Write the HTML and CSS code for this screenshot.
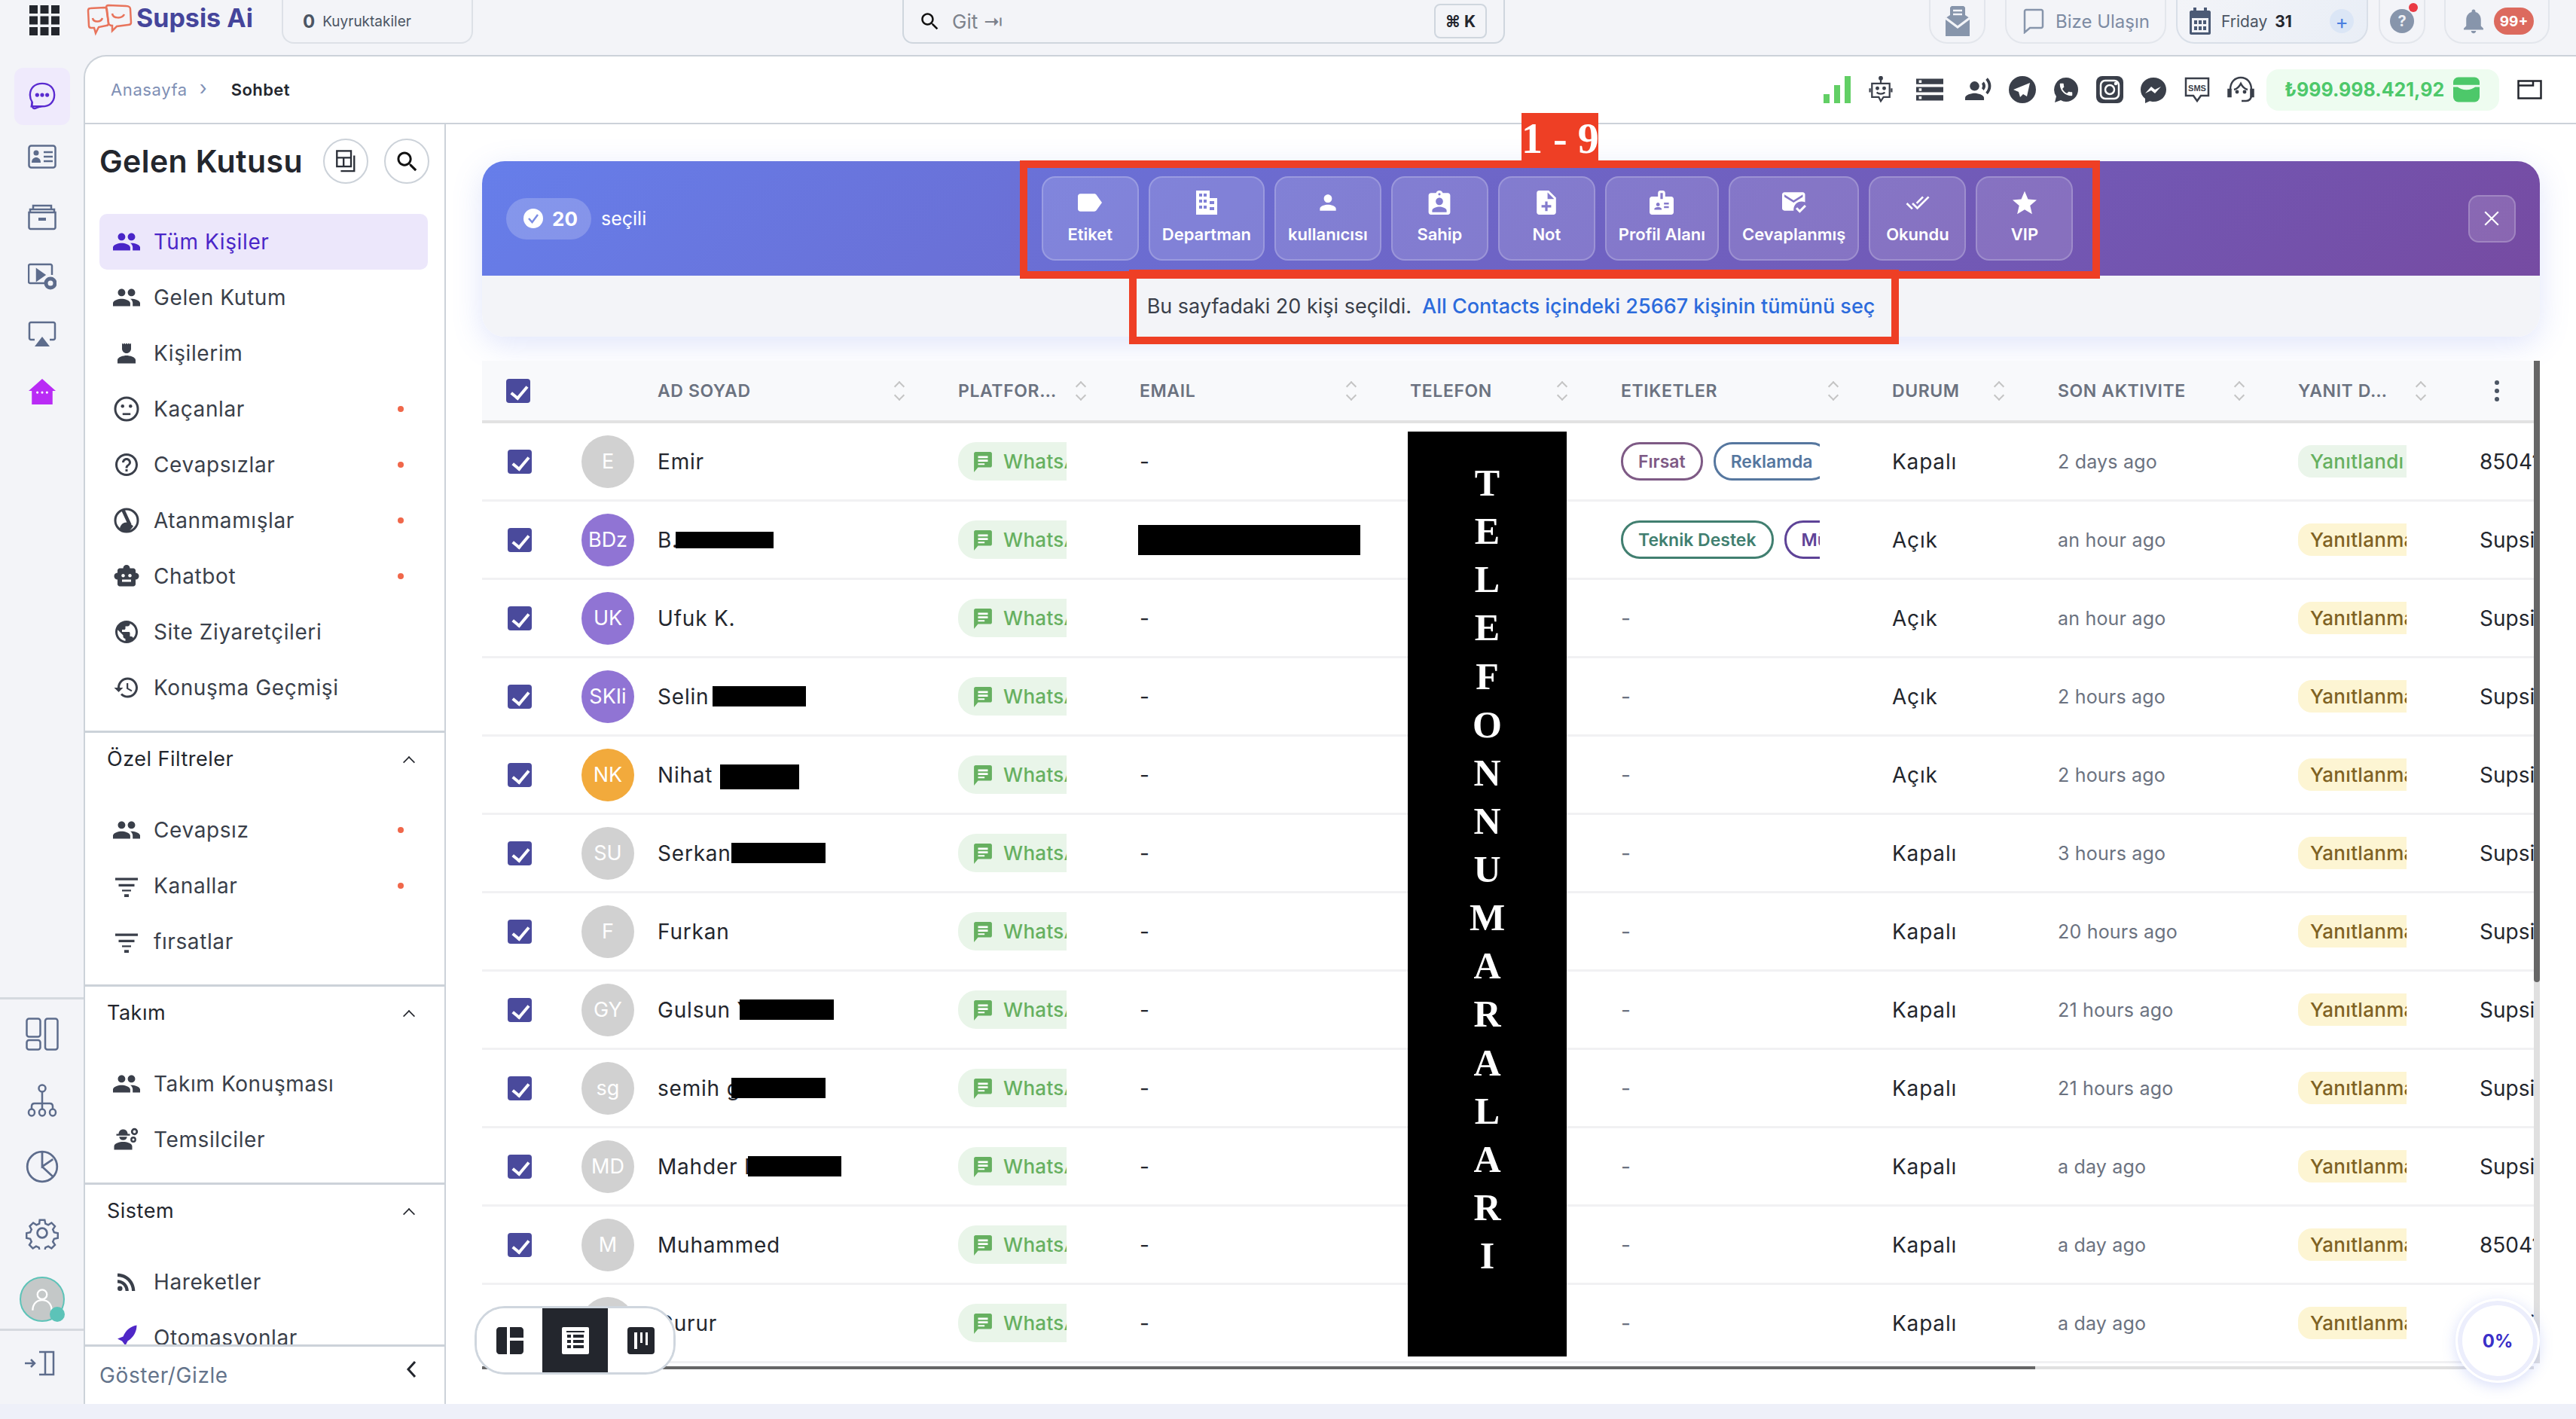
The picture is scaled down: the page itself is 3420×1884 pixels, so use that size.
FILE: index.html
```html
<!DOCTYPE html>
<html lang="en">
<head>
    <meta charset="UTF-8">
    <meta name="viewport" content="width=device-width, initial-scale=1.0">
    <title>Sohbet - Supsis Ai</title>
    <link rel="stylesheet" href="styles.css">
</head>
<body>
    <svg class="sprite" xmlns="http://www.w3.org/2000/svg">
        <symbol id="i-people" viewBox="1 4 22 16"><path d="M16 11c1.66 0 2.99-1.34 2.99-3S17.66 5 16 5c-1.66 0-3 1.34-3 3s1.34 3 3 3zm-8 0c1.66 0 2.99-1.34 2.99-3S9.66 5 8 5C6.34 5 5 6.34 5 8s1.34 3 3 3zm0 2c-2.33 0-7 1.17-7 3.5V19h14v-2.5c0-2.33-4.67-3.5-7-3.5zm8 0c-.29 0-.62.02-.97.05 1.16.84 1.97 1.97 1.97 3.45V19h6v-2.5c0-2.33-4.67-3.5-7-3.5z"/></symbol>
        <symbol id="i-person" viewBox="0 0 24 24"><path d="M12 12c2.21 0 4-1.79 4-4V3l-1 1-1-1-1 1-1-1-1 1-1-1-1 1-1-1v5c0 2.21 1.79 4 4 4zm0 2c-2.67 0-8 1.34-8 4v3h16v-3c0-2.66-5.33-4-8-4z"/></symbol>
        <symbol id="i-user" viewBox="0 0 24 24"><path d="M12 12c2.21 0 4-1.79 4-4s-1.79-4-4-4-4 1.79-4 4 1.79 4 4 4zm0 2c-2.67 0-8 1.34-8 4v2h16v-2c0-2.66-5.33-4-8-4z"/></symbol>
        <symbol id="i-sad" viewBox="0 0 24 24"><circle cx="12" cy="12" r="10" fill="none" stroke="currentColor" stroke-width="2"/><circle cx="8.5" cy="9.5" r="1.5"/><circle cx="15.5" cy="9.5" r="1.5"/><path d="M8.5 16.5h7" fill="none" stroke="currentColor" stroke-width="1.8"/></symbol>
        <symbol id="i-help" viewBox="0 0 24 24"><path d="M11 18h2v-2h-2v2zm1-16C6.48 2 2 6.48 2 12s4.48 10 10 10 10-4.48 10-10S17.52 2 12 2zm0 18c-4.41 0-8-3.59-8-8s3.59-8 8-8 8 3.59 8 8-3.59 8-8 8zm0-14c-2.21 0-4 1.79-4 4h2c0-1.1.9-2 2-2s2 .9 2 2c0 2-3 1.75-3 5h2c0-2.25 3-2.5 3-5 0-2.21-1.79-4-4-4z"/></symbol>
        <symbol id="i-unassigned" viewBox="0 0 24 24"><circle cx="12" cy="12" r="10" fill="none" stroke="currentColor" stroke-width="2"/><path d="M6 19c1-4 4-6 8-5l4 3c-2 3-4 5-6 5-2 0-4-1-6-3z"/><path d="M9 3l6 13" stroke="currentColor" stroke-width="3"/></symbol>
        <symbol id="i-bot" viewBox="0 0 24 24"><path d="M20 9V7c0-1.1-.9-2-2-2h-3c0-1.66-1.34-3-3-3S9 3.34 9 5H6c-1.1 0-2 .9-2 2v2c-1.66 0-3 1.34-3 3s1.34 3 3 3v4c0 1.1.9 2 2 2h12c1.1 0 2-.9 2-2v-4c1.66 0 3-1.34 3-3s-1.34-3-3-3zM7.5 11.5C7.5 10.67 8.17 10 9 10s1.5.67 1.5 1.5S9.83 13 9 13s-1.5-.67-1.5-1.5zM16 17H8v-2h8v2zm-1-4c-.83 0-1.5-.67-1.5-1.5S14.17 10 15 10s1.5.67 1.5 1.5S15.83 13 15 13z"/></symbol>
        <symbol id="i-globe" viewBox="0 0 24 24"><path d="M12 2C6.48 2 2 6.48 2 12s4.48 10 10 10 10-4.48 10-10S17.52 2 12 2zm-1 17.93c-3.95-.49-7-3.85-7-7.93 0-.62.08-1.21.21-1.79L9 15v1c0 1.1.9 2 2 2v1.93zm6.9-2.54c-.26-.81-1-1.39-1.9-1.39h-1v-3c0-.55-.45-1-1-1H8v-2h2c.55 0 1-.45 1-1V7h2c1.1 0 2-.9 2-2v-.41c2.93 1.19 5 4.06 5 7.41 0 2.08-.8 3.97-2.1 5.39z"/></symbol>
        <symbol id="i-history" viewBox="0 0 24 24"><path d="M13 3c-4.97 0-9 4.03-9 9H1l3.89 3.89.07.14L9 12H6c0-3.87 3.13-7 7-7s7 3.13 7 7-3.13 7-7 7c-1.93 0-3.68-.79-4.94-2.06l-1.42 1.42C8.27 19.99 10.51 21 13 21c4.97 0 9-4.03 9-9s-4.03-9-9-9zm-1 5v5l4.28 2.54.72-1.21-3.5-2.08V8H12z"/></symbol>
        <symbol id="i-filter" viewBox="0 0 24 24"><path d="M2 5h20v2.200H2zM5 10.500h14v2.200H5zM8 15.500h8v1.500H8zM10 19.500h4V22h-4z"/></symbol>
        <symbol id="i-worker" viewBox="0 0 24 24"><path d="M9 3c-2.500 0-4 1.800-4 4H3v1.500h12V7h-2c0-2.200-1.500-4-4-4zM5.500 9.500C5.800 11.500 7.200 12.500 9 12.500s3.200-1 3.500-3h-7zM9 14c-3 0-8 1.300-8 4v3h16v-3c0-2.700-5-4-8-4z"/><circle cx="19" cy="5" r="2.200" fill="none" stroke="currentColor" stroke-width="1.800"/><circle cx="18" cy="12" r="1.800" fill="none" stroke="currentColor" stroke-width="1.600"/></symbol>
        <symbol id="i-rss" viewBox="0 0 24 24"><circle cx="6.180" cy="17.820" r="2.180"/><path d="M4 4.440v2.830c7.030 0 12.730 5.700 12.730 12.730h2.830c0-8.590-6.970-15.560-15.560-15.560zm0 5.660v2.830c3.900 0 7.070 3.170 7.070 7.070h2.830c0-5.470-4.430-9.900-9.900-9.900z"/></symbol>
        <symbol id="i-rocket" viewBox="0 0 24 24"><path d="M21 1c-6 1-10 5-12 10l-5 2 4 2 3 4 2-4c5-3 8-8 8-14z" fill="#4f27c7"/><path d="M6 18c-1.500 .5-2 2-2 4 2 0 3.500-.5 4-2z" fill="#f0a24a"/></symbol>
        <symbol id="i-search" viewBox="2 2 19 19"><path d="M15.500 14h-.79l-.28-.27C15.410 12.590 16 11.110 16 9.500 16 5.910 13.090 3 9.500 3S3 5.910 3 9.500 5.910 16 9.500 16c1.610 0 3.090-.59 4.230-1.570l.27.28v.79l5 4.990L20.490 19l-4.990-5zm-6 0C7.010 14 5 11.990 5 9.500S7.010 5 9.500 5 14 7.010 14 9.500 11.990 14 9.500 14z"/></symbol>
        <symbol id="i-label" viewBox="3 5 19 14"><path d="M17.630 5.840C17.270 5.330 16.670 5 16 5L5 5.010C3.900 5.010 3 5.900 3 7v10c0 1.100.9 1.990 2 1.990L16 19c.67 0 1.270-.33 1.630-.84L22 12l-4.370-6.160z"/></symbol>
        <symbol id="i-domain" viewBox="3 2 14 16"><path d="M3 2h9v5h5v11H3zM5 4v2h2V4zm3 0v2h2V4zM5 8v2h2V8zm3 0v2h2V8zM5 12v2h2v-2zm3 0v2h2v-2zm4-3v2h3V9zm0 4v2h3v-2z" fill-rule="evenodd"/></symbol>
        <symbol id="i-owner" viewBox="3 1 18 20"><path d="M19 3h-4.180C14.400 1.840 13.300 1 12 1c-1.300 0-2.400.84-2.820 2H5c-1.100 0-2 .9-2 2v14c0 1.100.9 2 2 2h14c1.100 0 2-.9 2-2V5c0-1.100-.9-2-2-2zm-7 0c.55 0 1 .45 1 1s-.45 1-1 1-1-.45-1-1 .45-1 1-1zm0 4c1.660 0 3 1.340 3 3s-1.340 3-3 3-3-1.340-3-3 1.340-3 3-3zm6 12H6v-1.400c0-2 4-3.100 6-3.100s6 1.100 6 3.100V19z"/></symbol>
        <symbol id="i-note" viewBox="4 2 16 20"><path d="M14 2H6c-1.100 0-1.990.9-1.990 2L4 20c0 1.100.89 2 1.990 2H18c1.100 0 2-.9 2-2V8l-6-6zm2 14h-3v3h-2v-3H8v-2h3v-3h2v3h3v2zm-3-7V3.500L18.500 9H13z"/></symbol>
        <symbol id="i-badge" viewBox="2 2 20 20"><path d="M20 7h-5V4c0-1.100-.9-2-2-2h-2c-1.100 0-2 .9-2 2v3H4c-1.100 0-2 .9-2 2v11c0 1.100.9 2 2 2h16c1.100 0 2-.9 2-2V9c0-1.100-.9-2-2-2zM9 12c.83 0 1.500.67 1.500 1.500S9.830 15 9 15s-1.500-.67-1.500-1.500S8.170 12 9 12zm3 6H6v-.75c0-1 2-1.500 3-1.500s3 .5 3 1.500V18zm1-9h-2V4h2v5zm5 7.500h-4V15h4v1.500zm0-3h-4V12h4v1.500z"/></symbol>
        <symbol id="i-replied" viewBox="2 4 21 18"><path d="M12 19c0-3.870 3.130-7 7-7 1.080 0 2.090.25 3 .68V6c0-1.100-.9-2-2-2H4c-1.100 0-2 .9-2 2v12c0 1.100.9 2 2 2h8.080c-.05-.33-.08-.66-.08-1zM4 6l8 5 8-5v2l-8 5-8-5V6zm13.340 16l-3.540-3.540 1.410-1.410 2.120 2.120 4.240-4.240L23 16.340 17.340 22z"/></symbol>
        <symbol id="i-read" viewBox="0 3 24 18"><path d="M18 7l-1.410-1.410-6.340 6.340 1.410 1.410L18 7zm4.240-1.410L11.660 16.170 7.480 12l-1.410 1.410L11.660 19l12-12-1.420-1.410zM.41 13.410L6 19l1.410-1.410L1.830 12 .41 13.410z"/></symbol>
        <symbol id="i-star" viewBox="2 2 20 19"><path d="M12 17.270L18.180 21l-1.640-7.030L22 9.240l-7.190-.61L12 2 9.190 8.630 2 9.240l5.460 4.730L5.820 21z"/></symbol>
        <symbol id="i-msg" viewBox="0 0 24 26"><path d="M3 1h18c1 0 2 1 2 2v15c0 1-1 2-2 2H6l-5 6V3c0-1 1-2 2-2z"/><path d="M6 6h12v2.500H6zM6 10.500h12V13H6zM6 15h8v2H6z" fill="#fff"/></symbol>
        <symbol id="i-phone" viewBox="0 0 24 24"><path d="M6.620 10.790c1.440 2.830 3.760 5.140 6.590 6.590l2.200-2.200c.27-.27.67-.36 1.020-.24 1.120.37 2.330.57 3.570.57.55 0 1 .45 1 1V20c0 .55-.45 1-1 1-9.390 0-17-7.610-17-17 0-.55.45-1 1-1h3.500c.55 0 1 .45 1 1 0 1.250.2 2.450.57 3.570.11.35.03.74-.25 1.020l-2.200 2.200z"/></symbol>
    </svg>

    <header class="topbar">
        <svg class="apps" viewBox="0 0 40 40"><path d="M0 0h11v11H0zM14.500 0h11v11h-11zM29 0h11v11H29zM0 14.500h11v11H0zM14.500 14.500h11v11h-11zM29 14.500h11v11H29zM0 29h11v11H0zM14.500 29h11v11h-11zM29 29h11v11H29z"/></svg>
        <svg class="logo-mark" viewBox="0 0 62 44" fill="none" stroke="#e8745c" stroke-width="2.500"><path d="M3 9c0-2 1-3 3-3l19-1c2 0 3 1 3 3l2 18c0 2-1 3-3 3l-10 2-4 8-2-7-4 0c-2 0-3-1-3-3z"/><path d="M27 5c0-2 1-3 3-3l24 1c3 0 5 2 5 4l1 18c0 2-2 3-4 3l-15 2-6 6v-7c-3 0-5-2-5-4z"/><path d="M9 19c1 6 11 6 13 0M35 13c1 7 13 7 16 1"/></svg>
        <span class="logo-text">Supsis Ai</span>
        <div class="queue"><b>0</b><span>Kuyruktakiler</span></div>
        <div class="global-search">
            <svg class="ic-24"><use href="#i-search"/></svg>
            <span class="search-hint">Git ⇥</span>
            <kbd>⌘ K</kbd>
        </div>
        <div class="top-tools">
            <div class="tool tool-mail">
                <svg viewBox="0 0 32 40" class="ic-mail"><path d="M8 0h16l2 2v10l6 4v24H0V16l6-4V2z"/><path d="M0 16l16 12 16-12" fill="none" stroke="#f3f4f8" stroke-width="3"/><path d="M10 6h12M10 11h12" stroke="#f3f4f8" stroke-width="2.500"/></svg>
            </div>
            <div class="tool tool-contact">
                <svg viewBox="0 0 28 34" class="ic-chat" fill="none" stroke="#8795ab" stroke-width="2.500"><path d="M4 2h20c1 0 2 1 2 2v20c0 1-1 2-2 2H9l-7 6V4c0-1 1-2 2-2z"/></svg>
                <span>Bize Ulaşın</span>
            </div>
            <div class="tool tool-date">
                <svg viewBox="0 0 28 36" class="ic-cal"><path d="M5 0h4v4h10V0h4v4h3c1 0 2 1 2 2v28c0 1-1 2-2 2H2c-1 0-2-1-2-2V6c0-1 1-2 2-2h3zM3 14v19h22V14z"/><path d="M6 17h4v5H6zM12 17h4v5h-4zM18 17h4v5h-4zM6 25h4v5H6zM12 25h4v5h-4zM18 25h4v5h-4z"/></svg>
                <span class="day">Friday <b>31</b></span>
                <span class="plus">+</span>
            </div>
            <div class="tool tool-help"><span class="help-dot">?</span><i class="red-dot"></i></div>
            <div class="tool tool-bell">
                <svg viewBox="4 2 16 20" class="ic-bell"><path d="M12 22c1.100 0 2-.9 2-2h-4c0 1.100.89 2 2 2zm6-6v-5c0-3.070-1.640-5.640-4.500-6.320V4c0-.83-.67-1.500-1.500-1.500s-1.500.67-1.500 1.500v.68C7.630 5.360 6 7.920 6 11v5l-2 2v1h16v-1l-2-2z"/></svg>
                <span class="count">99+</span>
            </div>
        </div>
    </header>

    <div class="shell">
        <nav class="rail">
            <div class="rail-top">
                <a class="rail-item active"><svg viewBox="0 0 38 40" fill="none" stroke="currentColor" stroke-width="2.500"><path d="M19 2c10 0 17 6 17 16s-7 16-17 16H4l1-6c-2-3-3-6-3-10C2 8 9 2 19 2z"/><path d="M5 28c-1 5 1 9 3 9 3 0 5-3 10-3" /><circle cx="12" cy="18" r="1.500" fill="currentColor"/><circle cx="19" cy="18" r="1.500" fill="currentColor"/><circle cx="26" cy="18" r="1.500" fill="currentColor"/></svg></a>
                <a class="rail-item"><svg viewBox="0 0 38 32" fill="none" stroke="currentColor" stroke-width="2.500"><rect x="1.500" y="1.500" width="35" height="29" rx="3"/><circle cx="11" cy="11" r="3.500" fill="currentColor" stroke="none"/><path d="M5 24c0-5 3-7 6-7s6 2 6 7z" fill="currentColor" stroke="none"/><path d="M21 10h12M21 16h12M21 22h12"/></svg></a>
                <a class="rail-item"><svg viewBox="0 0 38 34" fill="none" stroke="currentColor" stroke-width="2.500"><path d="M7 6V2h24v4M3 11V7h32v4M1.500 11h35v20c0 1-1 2-2 2h-31c-1 0-2-1-2-2z"/><path d="M14 20h10" stroke-width="4"/></svg></a>
                <a class="rail-item"><svg viewBox="0 0 38 36" fill="none" stroke="currentColor" stroke-width="2.500"><path d="M24 26H3c-1 0-2-1-2-2V3c0-1 1-2 2-2h27c1 0 2 1 2 2v12"/><path d="M12 8l10 7-10 7z" fill="currentColor"/><circle cx="30" cy="26" r="6" stroke-width="5"/></svg></a>
                <a class="rail-item tight"><svg viewBox="0 0 38 34" fill="none" stroke="currentColor" stroke-width="2.500"><path d="M9 24H4c-1 0-2-1-2-2V3c0-1 1-2 2-2h30c1 0 2 1 2 2v19c0 1-1 2-2 2h-5"/><path d="M19 20l10 13H9z" fill="currentColor" stroke="none"/></svg></a>
                <a class="rail-item tight home"><svg viewBox="0 0 34 32"><path d="M17 0l17 15h-4v17H4V15H0z"/><circle cx="11" cy="17" r="1.500" fill="#fff"/><circle cx="17" cy="17" r="1.500" fill="#fff"/><circle cx="23" cy="17" r="1.500" fill="#fff"/></svg></a>
            </div>
            <div class="rail-bottom">
                <a class="rail-item small"><svg viewBox="0 0 44 44" fill="none" stroke="currentColor" stroke-width="2.500"><rect x="1.500" y="1.500" width="18" height="24" rx="3"/><rect x="1.500" y="30" width="18" height="12.500" rx="3"/><rect x="26" y="1.500" width="16.500" height="41" rx="3"/></svg></a>
                <a class="rail-item small"><svg viewBox="0 0 40 44" fill="none" stroke="currentColor" stroke-width="2.500"><circle cx="20" cy="6" r="4.500"/><path d="M20 11v15M6 34v-4c0-2 1-4 4-4h20c3 0 4 2 4 4v4M20 26v8"/><ellipse cx="6" cy="38" rx="4" ry="4.500"/><ellipse cx="20" cy="38" rx="4" ry="4.500"/><ellipse cx="34" cy="38" rx="4" ry="4.500"/></svg></a>
                <a class="rail-item small"><svg viewBox="0 0 40 40" fill="none" stroke="currentColor" stroke-width="2.500"><circle cx="20" cy="20" r="18"/><path d="M20 2v18l13-9M20 20l13 12"/></svg></a>
                <a class="rail-item small"><svg viewBox="0 0 24 24" fill="none" stroke="currentColor" stroke-width="1.500"><circle cx="12" cy="12" r="3.500"/><path d="M10 1.500h4l.6 3 2.300 1 2.600-1.700 2.800 2.800-1.700 2.600 1 2.300 3 .6v4l-3 .6-1 2.300 1.700 2.600-2.800 2.800-2.600-1.700-2.300 1-.6 3h-4l-.6-3-2.300-1-2.600 1.700-2.800-2.800 1.700-2.600-1-2.300-3-.6v-4l3-.6 1-2.300L2 6.600l2.800-2.800 2.600 1.700 2.300-1z" transform="translate(1.200 1.200) scale(.9)"/></svg></a>
                <div class="rail-avatar">
                    <svg viewBox="0 0 40 40" fill="none" stroke="#fff" stroke-width="2.200"><circle cx="20" cy="14" r="6"/><path d="M8 34c0-8 5-13 12-13s12 5 12 13"/></svg>
                    <i class="online"></i>
                </div>
            </div>
            <div class="rail-collapse">
                <svg viewBox="0 0 40 34" fill="none" stroke="#5d6c8c" stroke-width="2.500"><path d="M0 17h12M8 12l5 5-5 5M19 2h8v30h-8M27 2h11v30H27"/></svg>
            </div>
        </nav>

        <main class="panel">
            <div class="crumbs">
                <a class="crumb-link">Anasayfa</a>
                <span class="crumb-sep">›</span>
                <span class="crumb-now">Sohbet</span>
                <div class="status-icons">
                    <svg class="st" viewBox="0 0 36 36"><path fill="#62cf65" d="M0 24h8v12H0zM14 12h8v24h-8zM28 0h8v36h-8z"/></svg>
                    <svg class="st" viewBox="0 0 36 40" fill="none" stroke="#3a3f4a" stroke-width="2.500"><circle cx="18" cy="3" r="2" fill="#3a3f4a"/><path d="M18 5v5M5 11h26v20H22l-4 6-3-6H5z"/><circle cx="13" cy="18" r="1.500" fill="#3a3f4a"/><circle cx="23" cy="18" r="1.500" fill="#3a3f4a"/><path d="M12 24c3 3 9 3 12 0M2 18v6M34 18v6"/></svg>
                    <svg class="st st-gap" viewBox="2 4 20 16" fill="#3a3f4a"><path d="M2 20h20v-4H2v4zm2-3h2v2H4v-2zM2 4v4h20V4H2zm4 3H4V5h2v2zm-4 7h20v-4H2v4zm2-3h2v2H4v-2z"/></svg>
                    <svg class="st st-gap" viewBox="1 2 23 20" fill="#3a3f4a"><circle cx="9" cy="9" r="4"/><path d="M9 15c-2.670 0-8 1.340-8 4v2h16v-2c0-2.660-5.330-4-8-4zm7.760-9.640l-1.680 1.690c.84 1.180.84 2.710 0 3.890l1.680 1.690c2.020-2.020 2.020-5.070 0-7.270zM20.070 2l-1.630 1.630c2.770 3.020 2.770 7.560 0 10.740L20.070 16c3.900-3.890 3.910-9.950 0-14z"/></svg>
                    <svg class="st" viewBox="0 0 36 36"><circle cx="18" cy="18" r="18" fill="#3a3f4a"/><path fill="#fff" d="M28 9L6 18l7 3 2 7 4-4 5 3z"/></svg>
                    <svg class="st" viewBox="0 0 36 36"><path fill="#3a3f4a" d="M18 2a16 16 0 0 1 0 32c-3 0-5-.7-7-2l-8 3 2-8a16 16 0 0 1 13-25z"/><use href="#i-phone" x="7" y="7" width="22" height="22" fill="#fff"/></svg>
                    <svg class="st" viewBox="0 0 36 36" fill="none" stroke="#fff" stroke-width="2.500"><rect width="36" height="36" rx="8" fill="#3a3f4a" stroke="none"/><rect x="6" y="6" width="24" height="24" rx="6"/><circle cx="18" cy="18" r="6"/><circle cx="26" cy="10" r="1" fill="#fff"/></svg>
                    <svg class="st" viewBox="0 0 36 36"><path fill="#3a3f4a" d="M18 2c10 0 17 7 17 16s-7 16-17 16c-2 0-3-.3-5-.8L7 36v-6C3 27 1 23 1 18 1 9 8 2 18 2z"/><path fill="#fff" d="M7 23l8-9 5 4 8-4-8 9-5-4z"/></svg>
                    <svg class="st" viewBox="0 0 36 36" fill="none" stroke="#3a3f4a" stroke-width="2.500"><path d="M3 3h30v23H23l-5 7-5-7H3z"/><text x="18" y="20" text-anchor="middle" font-family="Liberation Sans, sans-serif" font-size="11" font-weight="700" fill="#3a3f4a" stroke="none">SMS</text></svg>
                    <svg class="st" viewBox="0 0 36 36" fill="none" stroke="#3a3f4a" stroke-width="2.500"><path d="M4 18C4 8 10 2 18 2s14 6 14 16v8c0 4-3 7-7 7h-6"/><path d="M9 18c4-1 7-4 9-8 2 4 5 7 9 8"/><rect x="1.500" y="18" width="3" height="9" fill="#3a3f4a"/><rect x="31.500" y="18" width="3" height="9" fill="#3a3f4a"/><circle cx="13" cy="21" r="1.200" fill="#3a3f4a"/><circle cx="23" cy="21" r="1.200" fill="#3a3f4a"/></svg>
                    <div class="wallet">
                        <span>₺999.998.421,92</span>
                        <svg viewBox="0 0 36 34"><rect width="36" height="34" rx="7" fill="#4dc86a"/><path d="M0 12h36" stroke="#eefcf0" stroke-width="3"/><path d="M5 12c6 7 20 7 26 0" fill="#eefcf0"/></svg>
                    </div>
                    <svg class="st-last" viewBox="0 0 33 26" fill="none" stroke="#23262d" stroke-width="2.500"><path d="M21 1.500h10.500v23h-30V1.500H21v6H1.500"/></svg>
                </div>
            </div>

            <div class="panel-body">
                <aside class="inbox">
                    <div class="inbox-head">
                        <h1>Gelen Kutusu</h1>
                        <button class="round-btn"><svg viewBox="0 0 28 32" fill="none" stroke="#2b2f38" stroke-width="2.500"><rect x="1.500" y="1.500" width="20" height="22"/><path d="M1.500 11h20M11 11v12M26 8v22H7"/></svg></button>
                        <button class="round-btn"><svg class="ic-24"><use href="#i-search"/></svg></button>
                    </div>
                    <div class="inbox-scroll">
                        <section class="menu-block">
                            <a class="menu-item active"><svg><use href="#i-people"/></svg><span>Tüm Kişiler</span></a>
                            <a class="menu-item"><svg><use href="#i-people"/></svg><span>Gelen Kutum</span></a>
                            <a class="menu-item"><svg><use href="#i-person"/></svg><span>Kişilerim</span></a>
                            <a class="menu-item"><svg><use href="#i-sad"/></svg><span>Kaçanlar</span><i class="dot"></i></a>
                            <a class="menu-item"><svg><use href="#i-help"/></svg><span>Cevapsızlar</span><i class="dot"></i></a>
                            <a class="menu-item"><svg><use href="#i-unassigned"/></svg><span>Atanmamışlar</span><i class="dot"></i></a>
                            <a class="menu-item"><svg><use href="#i-bot"/></svg><span>Chatbot</span><i class="dot"></i></a>
                            <a class="menu-item"><svg><use href="#i-globe"/></svg><span>Site Ziyaretçileri</span></a>
                            <a class="menu-item"><svg><use href="#i-history"/></svg><span>Konuşma Geçmişi</span></a>
                        </section>
                        <section class="menu-block">
                            <div class="block-title">Özel Filtreler<span class="caret"></span></div>
                            <a class="menu-item"><svg><use href="#i-people"/></svg><span>Cevapsız</span><i class="dot"></i></a>
                            <a class="menu-item"><svg><use href="#i-filter"/></svg><span>Kanallar</span><i class="dot"></i></a>
                            <a class="menu-item"><svg><use href="#i-filter"/></svg><span>fırsatlar</span></a>
                        </section>
                        <section class="menu-block">
                            <div class="block-title">Takım<span class="caret"></span></div>
                            <a class="menu-item"><svg><use href="#i-people"/></svg><span>Takım Konuşması</span></a>
                            <a class="menu-item"><svg><use href="#i-worker"/></svg><span>Temsilciler</span></a>
                        </section>
                        <section class="menu-block">
                            <div class="block-title">Sistem<span class="caret"></span></div>
                            <a class="menu-item"><svg><use href="#i-rss"/></svg><span>Hareketler</span></a>
                            <a class="menu-item"><svg><use href="#i-rocket"/></svg><span>Otomasyonlar</span></a>
                        </section>
                    </div>
                    <div class="inbox-foot">
                        <span>Göster/Gizle</span>
                        <svg viewBox="0 0 14 24" fill="none" stroke="#23262d" stroke-width="3"><path d="M12 2L3 12l9 10"/></svg>
                    </div>
                </aside>

                <div class="content">
                    <div class="banner">
                        <div class="banner-top">
                            <div class="selected">
                                <span class="selected-pill">
                                    <svg viewBox="0 0 26 26"><circle cx="13" cy="13" r="13" fill="#fff"/><path d="M7 13l4.500 5L19 8" fill="none" stroke="#7b8de4" stroke-width="2.500"/></svg>
                                    <b>20</b>
                                </span>
                                <span>seçili</span>
                            </div>
                            <div class="actions">
                                <button class="action"><svg><use href="#i-label"/></svg>Etiket</button>
                                <button class="action"><svg><use href="#i-domain"/></svg>Departman</button>
                                <button class="action"><svg><use href="#i-user"/></svg>kullanıcısı</button>
                                <button class="action"><svg><use href="#i-owner"/></svg>Sahip</button>
                                <button class="action"><svg><use href="#i-note"/></svg>Not</button>
                                <button class="action"><svg><use href="#i-badge"/></svg>Profil Alanı</button>
                                <button class="action"><svg><use href="#i-replied"/></svg>Cevaplanmış</button>
                                <button class="action"><svg><use href="#i-read"/></svg>Okundu</button>
                                <button class="action"><svg><use href="#i-star"/></svg>VIP</button>
                            </div>
                            <button class="banner-close"><svg viewBox="0 0 20 20" fill="none" stroke="#fff" stroke-width="2"><path d="M2 2l16 16M18 2L2 18"/></svg></button>
                        </div>
                        <div class="banner-bottom">
                            Bu sayfadaki 20 kişi seçildi.
                            <a>All Contacts içindeki 25667 kişinin tümünü seç</a>
                        </div>
                        <div class="mark mark-actions"></div>
                        <div class="mark mark-select"></div>
                        <div class="mark-tag">1 - 9</div>
                    </div>

                    <div class="table-wrap">
                        <div class="table">
                            <div class="row head">
                                <div class="cell"><span class="check"></span></div>
                                <div class="cell"><span class="th th-name">AD SOYAD</span><span class="sort"></span></div>
                                <div class="cell"><span class="th">PLATFOR…</span><span class="sort"></span></div>
                                <div class="cell"><span class="th">EMAIL</span><span class="sort"></span></div>
                                <div class="cell"><span class="th">TELEFON</span><span class="sort"></span></div>
                                <div class="cell"><span class="th">ETIKETLER</span><span class="sort"></span></div>
                                <div class="cell"><span class="th">DURUM</span><span class="sort"></span></div>
                                <div class="cell"><span class="th">SON AKTIVITE</span><span class="sort"></span></div>
                                <div class="cell"><span class="th">YANIT D…</span><span class="sort"></span></div>
                                <div class="cell"><span class="kebab"></span></div>
                            </div>

                            <div class="row">
                                <div class="cell"><span class="check"></span></div>
                                <div class="cell"><span class="avatar">E</span><span class="name">Emir</span></div>
                                <div class="cell"><span class="clip"><span class="platform"><svg><use href="#i-msg"/></svg>WhatsApp</span></span></div>
                                <div class="cell">-</div>
                                <div class="cell"></div>
                                <div class="cell"><span class="tags"><span class="tag tag-plum">Fırsat</span><span class="tag tag-blue">Reklamda</span></span></div>
                                <div class="cell status">Kapalı</div>
                                <div class="cell when">2 days ago</div>
                                <div class="cell"><span class="clip"><span class="reply ok">Yanıtlandı</span></span></div>
                                <div class="cell source">850412</div>
                            </div>
                            <div class="row">
                                <div class="cell"><span class="check"></span></div>
                                <div class="cell"><span class="avatar purple">BDz</span><span class="name">B.<i class="redact r-b"></i></span></div>
                                <div class="cell"><span class="clip"><span class="platform"><svg><use href="#i-msg"/></svg>WhatsApp</span></span></div>
                                <div class="cell"><i class="redact r-mail"></i></div>
                                <div class="cell"></div>
                                <div class="cell"><span class="tags"><span class="tag tag-green">Teknik Destek</span><span class="tag tag-violet">Müşteri</span></span></div>
                                <div class="cell status">Açık</div>
                                <div class="cell when">an hour ago</div>
                                <div class="cell"><span class="clip"><span class="reply">Yanıtlanmadı</span></span></div>
                                <div class="cell source">Supsis</div>
                            </div>
                            <div class="row">
                                <div class="cell"><span class="check"></span></div>
                                <div class="cell"><span class="avatar purple">UK</span><span class="name">Ufuk K.</span></div>
                                <div class="cell"><span class="clip"><span class="platform"><svg><use href="#i-msg"/></svg>WhatsApp</span></span></div>
                                <div class="cell">-</div>
                                <div class="cell"></div>
                                <div class="cell dash">-</div>
                                <div class="cell status">Açık</div>
                                <div class="cell when">an hour ago</div>
                                <div class="cell"><span class="clip"><span class="reply">Yanıtlanmadı</span></span></div>
                                <div class="cell source">Supsis</div>
                            </div>
                            <div class="row">
                                <div class="cell"><span class="check"></span></div>
                                <div class="cell"><span class="avatar purple">SKIi</span><span class="name">Selin<i class="redact r-selin"></i></span></div>
                                <div class="cell"><span class="clip"><span class="platform"><svg><use href="#i-msg"/></svg>WhatsApp</span></span></div>
                                <div class="cell">-</div>
                                <div class="cell"></div>
                                <div class="cell dash">-</div>
                                <div class="cell status">Açık</div>
                                <div class="cell when">2 hours ago</div>
                                <div class="cell"><span class="clip"><span class="reply">Yanıtlanmadı</span></span></div>
                                <div class="cell source">Supsis</div>
                            </div>
                            <div class="row">
                                <div class="cell"><span class="check"></span></div>
                                <div class="cell"><span class="avatar orange">NK</span><span class="name">Nihat<i class="redact r-nihat"></i></span></div>
                                <div class="cell"><span class="clip"><span class="platform"><svg><use href="#i-msg"/></svg>WhatsApp</span></span></div>
                                <div class="cell">-</div>
                                <div class="cell"></div>
                                <div class="cell dash">-</div>
                                <div class="cell status">Açık</div>
                                <div class="cell when">2 hours ago</div>
                                <div class="cell"><span class="clip"><span class="reply">Yanıtlanmadı</span></span></div>
                                <div class="cell source">Supsis</div>
                            </div>
                            <div class="row">
                                <div class="cell"><span class="check"></span></div>
                                <div class="cell"><span class="avatar">SU</span><span class="name">Serkan<i class="redact r-serkan"></i></span></div>
                                <div class="cell"><span class="clip"><span class="platform"><svg><use href="#i-msg"/></svg>WhatsApp</span></span></div>
                                <div class="cell">-</div>
                                <div class="cell"></div>
                                <div class="cell dash">-</div>
                                <div class="cell status">Kapalı</div>
                                <div class="cell when">3 hours ago</div>
                                <div class="cell"><span class="clip"><span class="reply">Yanıtlanmadı</span></span></div>
                                <div class="cell source">Supsis</div>
                            </div>
                            <div class="row">
                                <div class="cell"><span class="check"></span></div>
                                <div class="cell"><span class="avatar">F</span><span class="name">Furkan</span></div>
                                <div class="cell"><span class="clip"><span class="platform"><svg><use href="#i-msg"/></svg>WhatsApp</span></span></div>
                                <div class="cell">-</div>
                                <div class="cell"></div>
                                <div class="cell dash">-</div>
                                <div class="cell status">Kapalı</div>
                                <div class="cell when">20 hours ago</div>
                                <div class="cell"><span class="clip"><span class="reply">Yanıtlanmadı</span></span></div>
                                <div class="cell source">Supsis</div>
                            </div>
                            <div class="row">
                                <div class="cell"><span class="check"></span></div>
                                <div class="cell"><span class="avatar">GY</span><span class="name">Gulsun Y<i class="redact r-gulsun"></i></span></div>
                                <div class="cell"><span class="clip"><span class="platform"><svg><use href="#i-msg"/></svg>WhatsApp</span></span></div>
                                <div class="cell">-</div>
                                <div class="cell"></div>
                                <div class="cell dash">-</div>
                                <div class="cell status">Kapalı</div>
                                <div class="cell when">21 hours ago</div>
                                <div class="cell"><span class="clip"><span class="reply">Yanıtlanmadı</span></span></div>
                                <div class="cell source">Supsis</div>
                            </div>
                            <div class="row">
                                <div class="cell"><span class="check"></span></div>
                                <div class="cell"><span class="avatar">sg</span><span class="name">semih g<i class="redact r-semih"></i></span></div>
                                <div class="cell"><span class="clip"><span class="platform"><svg><use href="#i-msg"/></svg>WhatsApp</span></span></div>
                                <div class="cell">-</div>
                                <div class="cell"></div>
                                <div class="cell dash">-</div>
                                <div class="cell status">Kapalı</div>
                                <div class="cell when">21 hours ago</div>
                                <div class="cell"><span class="clip"><span class="reply">Yanıtlanmadı</span></span></div>
                                <div class="cell source">Supsis</div>
                            </div>
                            <div class="row">
                                <div class="cell"><span class="check"></span></div>
                                <div class="cell"><span class="avatar">MD</span><span class="name">Mahder D<i class="redact r-mahder"></i></span></div>
                                <div class="cell"><span class="clip"><span class="platform"><svg><use href="#i-msg"/></svg>WhatsApp</span></span></div>
                                <div class="cell">-</div>
                                <div class="cell"></div>
                                <div class="cell dash">-</div>
                                <div class="cell status">Kapalı</div>
                                <div class="cell when">a day ago</div>
                                <div class="cell"><span class="clip"><span class="reply">Yanıtlanmadı</span></span></div>
                                <div class="cell source">Supsis</div>
                            </div>
                            <div class="row">
                                <div class="cell"><span class="check"></span></div>
                                <div class="cell"><span class="avatar">M</span><span class="name">Muhammed</span></div>
                                <div class="cell"><span class="clip"><span class="platform"><svg><use href="#i-msg"/></svg>WhatsApp</span></span></div>
                                <div class="cell">-</div>
                                <div class="cell"></div>
                                <div class="cell dash">-</div>
                                <div class="cell status">Kapalı</div>
                                <div class="cell when">a day ago</div>
                                <div class="cell"><span class="clip"><span class="reply">Yanıtlanmadı</span></span></div>
                                <div class="cell source">850412</div>
                            </div>
                            <div class="row">
                                <div class="cell"><span class="check"></span></div>
                                <div class="cell"><span class="avatar">G</span><span class="name">Gurur</span></div>
                                <div class="cell"><span class="clip"><span class="platform"><svg><use href="#i-msg"/></svg>WhatsApp</span></span></div>
                                <div class="cell">-</div>
                                <div class="cell"></div>
                                <div class="cell dash">-</div>
                                <div class="cell status">Kapalı</div>
                                <div class="cell when">a day ago</div>
                                <div class="cell"><span class="clip"><span class="reply">Yanıtlanmadı</span></span></div>
                                <div class="cell source">Supsis</div>
                            </div>
                        </div>
                        <div class="vscroll"><div class="vthumb"></div></div>
                        <div class="hscroll"><div class="hthumb"></div></div>

                        <div class="phone-mask">
                            <span>T</span><span>E</span><span>L</span><span>E</span><span>F</span><span>O</span><span>N</span><span>N</span><span>U</span><span>M</span><span>A</span><span>R</span><span>A</span><span>L</span><span>A</span><span>R</span><span>I</span>
                        </div>
                    </div>

                    <div class="view-switch">
                        <button><svg viewBox="0 0 36 36"><path d="M4 0h10v36H4c-2 0-4-2-4-4V4c0-2 2-4 4-4zM18 0h14c2 0 4 2 4 4v10H18zM18 18h18v14c0 2-2 4-4 4H18z"/></svg></button>
                        <button class="on"><svg viewBox="0 0 36 36"><rect width="36" height="36" rx="2" fill="#fff"/><path fill="#23262d" d="M6 5h24v2H6zM7 10h5v4H7zM15 10h14v4H15zM7 17h5v4H7zM15 17h14v4H15zM7 24h5v4H7zM15 24h14v4H15z"/></svg></button>
                        <button><svg viewBox="0 0 36 36"><rect width="36" height="36" rx="4"/><path fill="#fff" d="M9 7h4v22H9zM17 7h3v14h-3zM24 7h3v17h-3z"/></svg></button>
                    </div>
                    <div class="progress-ring"><span>0%</span></div>
                </div>
            </div>
        </main>
    </div>
    <div class="page-foot"></div>
</body>
</html>
```

FILE: styles.css
```css
* {
    box-sizing: border-box;
}

body {
    font-family: Inter, "Open Sans", sans-serif;
    background-color: #f3f4f8;
    color: #23262d;
    margin: 0;
    height: 100vh;
    overflow: hidden;
}

.sprite {
    display: none;
}

button {
    font-family: inherit;
    cursor: pointer;
}

.ic-24 {
    width: 24px;
    height: 24px;
    fill: #111;
}

/* top bar */
.topbar {
    height: 73px;
    display: flex;
    align-items: flex-start;
    padding-left: 39px;
}

.apps {
    width: 40px;
    height: 40px;
    margin-top: 7px;
    fill: #23262d;
}

.logo-mark {
    width: 62px;
    height: 44px;
    margin: 5px 0 0 35px;
}

.logo-text {
    font-size: 34px;
    font-weight: 700;
    color: #45459b;
    line-height: 48px;
    margin-left: 5px;
    width: 155px;
    white-space: nowrap;
}

.queue {
    width: 254px;
    height: 58px;
    margin-left: 38px;
    padding-left: 26px;
    display: flex;
    align-items: center;
    gap: 10px;
    border: 2px solid #dde1e7;
    border-top: 0;
    border-radius: 0 0 16px 16px;
    font-size: 19px;
    color: #4b5563;
}

.queue b {
    font-size: 24px;
}

.global-search {
    width: 800px;
    height: 58px;
    margin-left: 570px;
    padding: 0 22px;
    display: flex;
    align-items: center;
    border: 2px solid #cfd6de;
    border-top: 0;
    border-radius: 0 0 14px 14px;
}

.search-hint {
    margin-left: 18px;
    font-size: 26px;
    color: #7d828c;
}

.global-search kbd {
    margin-left: auto;
    width: 70px;
    height: 46px;
    display: flex;
    align-items: center;
    justify-content: center;
    border: 2px solid #cfd6de;
    border-radius: 8px;
    font-family: inherit;
    font-size: 21px;
    font-weight: 700;
}

.top-tools {
    margin-left: auto;
    margin-right: 35px;
    display: flex;
}

.tool {
    height: 58px;
    display: flex;
    align-items: center;
    border: 2px solid #e3e6ec;
    border-top: 0;
    border-radius: 0 0 24px 24px;
}

.tool-mail {
    width: 75px;
    justify-content: center;
}

.ic-mail {
    width: 32px;
    height: 40px;
    fill: #8795ab;
}

.tool-contact {
    width: 214px;
    margin-left: 26px;
    padding-left: 22px;
    gap: 15px;
    font-size: 24px;
    color: #7d8ba3;
}

.ic-chat {
    width: 28px;
    height: 34px;
}

.tool-date {
    width: 255px;
    margin-left: 13px;
    padding-left: 16px;
    border-color: #d9dfe8;
    background: linear-gradient(110deg, #f3f4f8, #e9eef6);
}

.ic-cal {
    width: 28px;
    height: 36px;
    fill: #4b5a75;
}

.day {
    margin-left: 14px;
    font-size: 21px;
    color: #4b5563;
}

.day b {
    color: #23262d;
    margin-left: 4px;
}

.plus {
    margin-left: auto;
    margin-right: 17px;
    width: 32px;
    height: 32px;
    border-radius: 50%;
    display: flex;
    align-items: center;
    justify-content: center;
    background: #dbe6f6;
    color: #4a80e0;
    font-size: 26px;
}

.tool-help {
    width: 62px;
    margin-left: 14px;
    justify-content: center;
    position: relative;
}

.help-dot {
    width: 32px;
    height: 32px;
    border-radius: 50%;
    background: #8795ab;
    color: #eef0f5;
    font-size: 20px;
    font-weight: 700;
    display: flex;
    align-items: center;
    justify-content: center;
}

.red-dot {
    position: absolute;
    top: 4px;
    right: 8px;
    width: 12px;
    height: 12px;
    border-radius: 50%;
    background: #ea3a44;
}

.tool-bell {
    width: 140px;
    margin-left: 25px;
    padding-left: 24px;
    gap: 14px;
}

.ic-bell {
    width: 26px;
    height: 36px;
    fill: #8795ab;
}

.count {
    width: 53px;
    height: 36px;
    border-radius: 18px;
    background: #dc6a5e;
    color: #fff;
    font-size: 19px;
    font-weight: 700;
    display: flex;
    align-items: center;
    justify-content: center;
}

/* layout */
.shell {
    display: flex;
    height: 1791px;
}

.rail {
    width: 111px;
    flex-shrink: 0;
    display: flex;
    flex-direction: column;
    color: #5d6c8c;
}

.rail-top {
    height: 1254px;
    display: flex;
    flex-direction: column;
    align-items: center;
    padding-top: 17px;
    border-bottom: 3px solid #d5d9df;
}

.rail-item {
    width: 74px;
    height: 76px;
    display: flex;
    align-items: center;
    justify-content: center;
    margin-top: 4px;
    border-radius: 12px;
}

.rail-item.tight {
    margin-top: 0;
}

.rail-item svg {
    width: 38px;
    height: 38px;
}

.rail-item.active {
    background: #efeafc;
    color: #5a2bd0;
    margin-top: 0;
}

.rail-item.home svg {
    fill: #b92bf5;
    width: 36px;
    height: 36px;
}

.rail-bottom {
    height: 440px;
    display: flex;
    flex-direction: column;
    align-items: center;
    padding-top: 24px;
    border-bottom: 3px solid #d5d9df;
}

.rail-item.small {
    height: 44px;
    margin: 0 0 44px;
}

.rail-item.small svg {
    width: 44px;
    height: 44px;
}

.rail-avatar {
    width: 60px;
    height: 60px;
    margin-top: -8px;
    border-radius: 50%;
    background: #c4c8c8;
    border: 2px solid #5cc3b8;
    position: relative;
    display: flex;
    align-items: center;
    justify-content: center;
}

.rail-avatar svg {
    width: 42px;
    height: 42px;
}

.online {
    position: absolute;
    right: -2px;
    bottom: -2px;
    width: 20px;
    height: 20px;
    border-radius: 50%;
    background: #5cc3b8;
}

.rail-collapse {
    padding: 26px 0 0 33px;
}

.rail-collapse svg {
    width: 40px;
    height: 34px;
}

.panel {
    flex: 1;
    background: #fff;
    border-top: 2px solid #ccd2d9;
    border-left: 2px solid #ccd2d9;
    border-top-left-radius: 30px;
    display: flex;
    flex-direction: column;
    min-width: 0;
}

.page-foot {
    height: 20px;
    background: #eef0f9;
}

/* breadcrumb row */
.crumbs {
    height: 90px;
    flex-shrink: 0;
    padding: 0 45px 0 34px;
    display: flex;
    align-items: center;
    border-bottom: 2px solid #ccd2d9;
    font-size: 22px;
}

.crumb-link {
    color: #7f90b5;
    letter-spacing: 0.6px;
}

.crumb-sep {
    margin: 0 32px 0 16px;
    color: #7f90b5;
    font-size: 26px;
    line-height: 1;
    position: relative;
    top: -2px;
}

.crumb-now {
    font-weight: 600;
    letter-spacing: 0.4px;
}

.status-icons {
    margin-left: auto;
    display: flex;
    align-items: center;
    gap: 22px;
}

.st {
    width: 36px;
    height: 36px;
}

.st-gap {
    margin-left: 7px;
}

.wallet {
    width: 309px;
    height: 55px;
    margin-left: -6px;
    padding-left: 24px;
    display: flex;
    align-items: center;
    gap: 12px;
    background: #eefcf0;
    border-radius: 16px;
    color: #4dc86a;
    font-size: 25px;
    font-weight: 700;
    white-space: nowrap;
}

.wallet svg {
    width: 35px;
    height: 34px;
}

.st-last {
    width: 33px;
    height: 26px;
    margin-left: 2px;
}

.panel-body {
    flex: 1;
    display: flex;
    min-height: 0;
}

/* inbox column */
.inbox {
    width: 479px;
    flex-shrink: 0;
    border-right: 2px solid #ccd2d9;
    display: flex;
    flex-direction: column;
}

.inbox-head {
    height: 119px;
    flex-shrink: 0;
    padding: 0 22px 22px 19px;
    display: flex;
    align-items: center;
}

.inbox-head h1 {
    margin: 0;
    font-size: 41px;
    font-weight: 600;
    letter-spacing: 0.4px;
    width: 297px;
    flex-shrink: 0;
    white-space: nowrap;
}

.round-btn {
    width: 60px;
    height: 60px;
    flex-shrink: 0;
    padding: 0;
    margin-right: 21px;
    border: 2px solid #ccd2d9;
    border-radius: 50%;
    background: #fff;
    display: flex;
    align-items: center;
    justify-content: center;
}

.round-btn:last-child {
    margin-right: 0;
}

.round-btn svg {
    width: 28px;
    height: 30px;
}

.inbox-scroll {
    flex: 1;
    overflow: hidden;
    min-height: 0;
}

.menu-block {
    padding-bottom: 20px;
    border-bottom: 3px solid #ccd2d9;
}

.menu-block:last-child {
    border-bottom: 0;
}

.block-title {
    height: 92px;
    padding: 17px 40px 0 29px;
    line-height: 36px;
    font-size: 27px;
    letter-spacing: 0.5px;
    display: flex;
    justify-content: space-between;
}

.caret {
    width: 14px;
    height: 14px;
    margin: 15px 0 0;
    border-left: 2px solid #23262d;
    border-top: 2px solid #23262d;
    transform: rotate(45deg) scale(.8);
}

.menu-item {
    height: 74px;
    margin: 0 22px 0 19px;
    padding-left: 18px;
    display: flex;
    align-items: center;
    gap: 18px;
    font-size: 28px;
    letter-spacing: 0.6px;
    color: #3a3f4a;
    border-radius: 10px;
    white-space: nowrap;
}

.menu-item svg {
    width: 36px;
    height: 36px;
    flex-shrink: 0;
    fill: #3a3f4a;
    color: #3a3f4a;
}

.menu-item.active {
    background: #ece7fb;
    color: #4a26c8;
}

.menu-item.active svg {
    fill: #4a26c8;
}

.dot {
    margin-left: auto;
    margin-right: 32px;
    width: 8px;
    height: 8px;
    border-radius: 50%;
    background: #f0674a;
}

.inbox-foot {
    height: 79px;
    flex-shrink: 0;
    padding: 8px 37px 0 19px;
    display: flex;
    justify-content: space-between;
    align-items: flex-start;
    border-top: 3px solid #ccd2d9;
    font-size: 28px;
    letter-spacing: 0.6px;
    color: #64748b;
    line-height: 60px;
}

.inbox-foot svg {
    width: 14px;
    height: 24px;
    margin-top: 10px;
}

/* main content */
.content {
    flex: 1;
    min-width: 0;
    padding: 49px 48px 0 48px;
    position: relative;
}

.banner {
    position: relative;
    border-radius: 30px;
    box-shadow: 0 10px 40px rgba(102, 126, 234, 0.2);
}

.banner-top {
    height: 152px;
    padding: 0 32px;
    display: flex;
    align-items: center;
    justify-content: space-between;
    border-radius: 30px 30px 0 0;
    background: linear-gradient(135deg, #667eea 0%, #764ba2 100%);
    color: #fff;
}

.selected {
    display: flex;
    align-items: center;
    gap: 13px;
    font-size: 25px;
}

.selected-pill {
    width: 113px;
    height: 55px;
    padding-left: 23px;
    display: flex;
    align-items: center;
    gap: 12px;
    background: rgba(255, 255, 255, 0.2);
    border-radius: 28px;
}

.selected-pill svg {
    width: 26px;
    height: 26px;
}

.selected-pill b {
    font-size: 26px;
}

.actions {
    display: flex;
    gap: 13px;
}

.action {
    min-width: 129px;
    height: 112px;
    padding: 0 16px 3px;
    display: flex;
    flex-direction: column;
    align-items: center;
    justify-content: center;
    gap: 13px;
    background: rgba(255, 255, 255, 0.15);
    border: 2px solid rgba(255, 255, 255, 0.2);
    border-radius: 18px;
    color: #fff;
    font-size: 22px;
    font-weight: 600;
    white-space: nowrap;
}

.action svg {
    width: 32px;
    height: 32px;
    fill: #fff;
}

.banner-close {
    width: 63px;
    height: 63px;
    padding: 0;
    background: rgba(255, 255, 255, 0.15);
    border: 2px solid rgba(255, 255, 255, 0.2);
    border-radius: 14px;
    display: flex;
    align-items: center;
    justify-content: center;
}

.banner-close svg {
    width: 22px;
    height: 22px;
}

.banner-bottom {
    height: 81px;
    display: flex;
    align-items: center;
    justify-content: center;
    gap: 14px;
    background: #f3f4f8;
    border-radius: 0 0 30px 30px;
    font-size: 27px;
    color: #3a3f4a;
}

.banner-bottom a {
    color: #2c6bdc;
    font-weight: 500;
}

.mark {
    position: absolute;
    border: 10px solid #ee3f25;
}

.mark-actions {
    left: 714px;
    top: -1px;
    width: 1434px;
    height: 157px;
}

.mark-select {
    left: 859px;
    top: 144px;
    width: 1022px;
    height: 99px;
}

.mark-tag {
    position: absolute;
    left: 1380px;
    top: -64px;
    width: 102px;
    height: 64px;
    background: #ee3f25;
    color: #fff;
    font-family: "Liberation Serif", serif;
    font-weight: 700;
    font-size: 56px;
    line-height: 68px;
    text-align: center;
    white-space: nowrap;
}

/* table */
.table-wrap {
    margin-top: 32px;
    position: relative;
    display: grid;
    grid-template-columns: 2724px 8px;
    grid-template-rows: auto 4px;
    row-gap: 4px;
}

.table {
    min-width: 0;
    overflow: hidden;
}

.row {
    display: grid;
    grid-template-columns: 112px 500px 241px 359px 280px 360px 220px 319px 241px 92px;
    height: 104px;
    border-bottom: 3px solid #f1f1f3;
}

.row.head {
    height: 83px;
    background: #f8f9fb;
    border-bottom: 4px solid #e2e2e2;
}

.cell {
    padding-left: 20px;
    display: flex;
    align-items: center;
    min-width: 0;
    overflow: hidden;
    white-space: nowrap;
    font-size: 28px;
    letter-spacing: 0.8px;
    color: #23262d;
}

.row .cell:first-child {
    padding-left: 34px;
}

.row.head .cell:first-child {
    padding-left: 32px;
}

.row.head .cell {
    justify-content: space-between;
    padding-right: 50px;
}

.row.head .cell:nth-child(2) {
    padding-left: 121px;
}

.row.head .cell:last-child {
    padding: 0 6px 0 0;
    justify-content: center;
}

.th {
    font-size: 23px;
    font-weight: 600;
    color: #6b7280;
    letter-spacing: 0.6px;
}

.sort {
    width: 14px;
    height: 26px;
    flex-shrink: 0;
    position: relative;
    margin-right: 2px;
}

.sort::before,
.sort::after {
    content: '';
    position: absolute;
    left: 3px;
    width: 8px;
    height: 8px;
    border-left: 2px solid #c4c4c4;
    border-top: 2px solid #c4c4c4;
}

.sort::before {
    top: 2px;
    transform: rotate(45deg);
}

.sort::after {
    bottom: 2px;
    transform: rotate(225deg);
}

.kebab {
    width: 6px;
    height: 6px;
    border-radius: 50%;
    background: #4b5563;
    box-shadow: 0 -11px 0 #4b5563, 0 11px 0 #4b5563;
}

.check {
    width: 32px;
    height: 32px;
    border-radius: 4px;
    background: #4a4a9c;
    position: relative;
    flex-shrink: 0;
}

.check::after {
    content: '';
    position: absolute;
    left: 11px;
    top: 5px;
    width: 9px;
    height: 18px;
    border-right: 4px solid #fff;
    border-bottom: 4px solid #fff;
    transform: rotate(40deg);
}

.avatar {
    width: 70px;
    height: 70px;
    flex-shrink: 0;
    border-radius: 50%;
    background: #d1d1d1;
    color: #fff;
    font-size: 27px;
    letter-spacing: 0;
    display: flex;
    align-items: center;
    justify-content: center;
}

.avatar.purple {
    background: #9074d4;
}

.avatar.orange {
    background: #f2aa3c;
}

.name {
    margin-left: 31px;
    display: flex;
    align-items: center;
}

.redact {
    display: inline-block;
    background: #000;
    flex-shrink: 0;
}

.r-b { width: 130px; height: 22px; margin-left: -4px; }
.r-selin { width: 124px; height: 27px; margin-left: 5px; }
.r-nihat { width: 105px; height: 33px; margin-left: 10px; margin-top: 6px; }
.r-serkan { width: 125px; height: 27px; margin-left: 0; }
.r-gulsun { width: 125px; height: 27px; margin-left: -16px; }
.r-semih { width: 125px; height: 27px; margin-left: -12px; }
.r-mahder { width: 124px; height: 27px; margin-left: -16px; }
.r-mail { width: 295px; height: 40px; margin-left: -2px; }

.clip {
    display: block;
    width: 144px;
    overflow: hidden;
    flex-shrink: 0;
}

.platform {
    height: 51px;
    width: 220px;
    padding-left: 20px;
    display: inline-flex;
    align-items: center;
    gap: 14px;
    background: #e9f5e9;
    border-radius: 24px;
    color: #66b060;
    font-size: 26px;
    letter-spacing: 0.3px;
    font-weight: 500;
}

.platform svg {
    width: 26px;
    height: 30px;
    fill: #66b060;
}

.tags {
    width: 264px;
    display: flex;
    gap: 14px;
    overflow: hidden;
    flex-shrink: 0;
}

.tag {
    height: 51px;
    padding: 0 20px;
    display: inline-flex;
    align-items: center;
    border: 3px solid;
    border-radius: 25px;
    font-size: 23px;
    letter-spacing: 0;
    font-weight: 600;
    flex-shrink: 0;
}

.tag-plum { color: #7e5a85; }
.tag-blue { color: #56779f; }
.tag-green { color: #417f70; }
.tag-violet { color: #5e4397; }

.dash,
.when {
    color: #6b7280;
}

.when {
    font-size: 25px;
    letter-spacing: 0.2px;
}

.source {
    letter-spacing: 0;
}

.reply {
    height: 43px;
    width: 220px;
    padding-left: 16px;
    display: inline-flex;
    align-items: center;
    background: #fdf5d3;
    border-radius: 18px;
    color: #7f6223;
    font-size: 26px;
    letter-spacing: 0.3px;
    font-weight: 500;
}

.reply.ok {
    background: #eaf5ea;
    color: #66b060;
}

.vscroll {
    background: #e0e0e0;
}

.vthumb {
    height: 825px;
    background: #666;
    border-radius: 0 0 4px 4px;
}

.hscroll {
    grid-column: 1 / 2;
    background: #e0e0e0;
}

.hthumb {
    width: 2062px;
    height: 100%;
    background: #666;
}

.phone-mask {
    position: absolute;
    left: 1229px;
    top: 94px;
    width: 211px;
    height: 1228px;
    background: #000;
    color: #fff;
    font-family: "Liberation Serif", serif;
    font-weight: 700;
    font-size: 50px;
    display: flex;
    flex-direction: column;
    align-items: center;
    padding: 38px 0 104px;
    justify-content: space-between;
    line-height: 60px;
}

.view-switch {
    position: absolute;
    left: 38px;
    top: 1569px;
    width: 267px;
    height: 91px;
    display: flex;
    justify-content: center;
    border: 3px solid #cfd6de;
    border-radius: 40px;
    background: #fff;
    overflow: hidden;
}

.view-switch button {
    width: 88px;
    padding: 0;
    border: 0;
    background: #fff;
    display: flex;
    align-items: center;
    justify-content: center;
}

.view-switch button.on {
    background: #23262d;
}

.view-switch svg {
    width: 36px;
    height: 36px;
    fill: #23262d;
}

.progress-ring {
    position: absolute;
    right: 48px;
    top: 1559px;
    width: 112px;
    height: 112px;
    border-radius: 50%;
    background: #fff;
    border: 3px solid #fff;
    box-shadow: inset 0 0 0 6px #eceefc, 0 4px 18px rgba(102, 126, 234, 0.25);
    display: flex;
    align-items: center;
    justify-content: center;
    color: #3a2fc8;
    font-size: 24px;
    font-weight: 700;
}
```
